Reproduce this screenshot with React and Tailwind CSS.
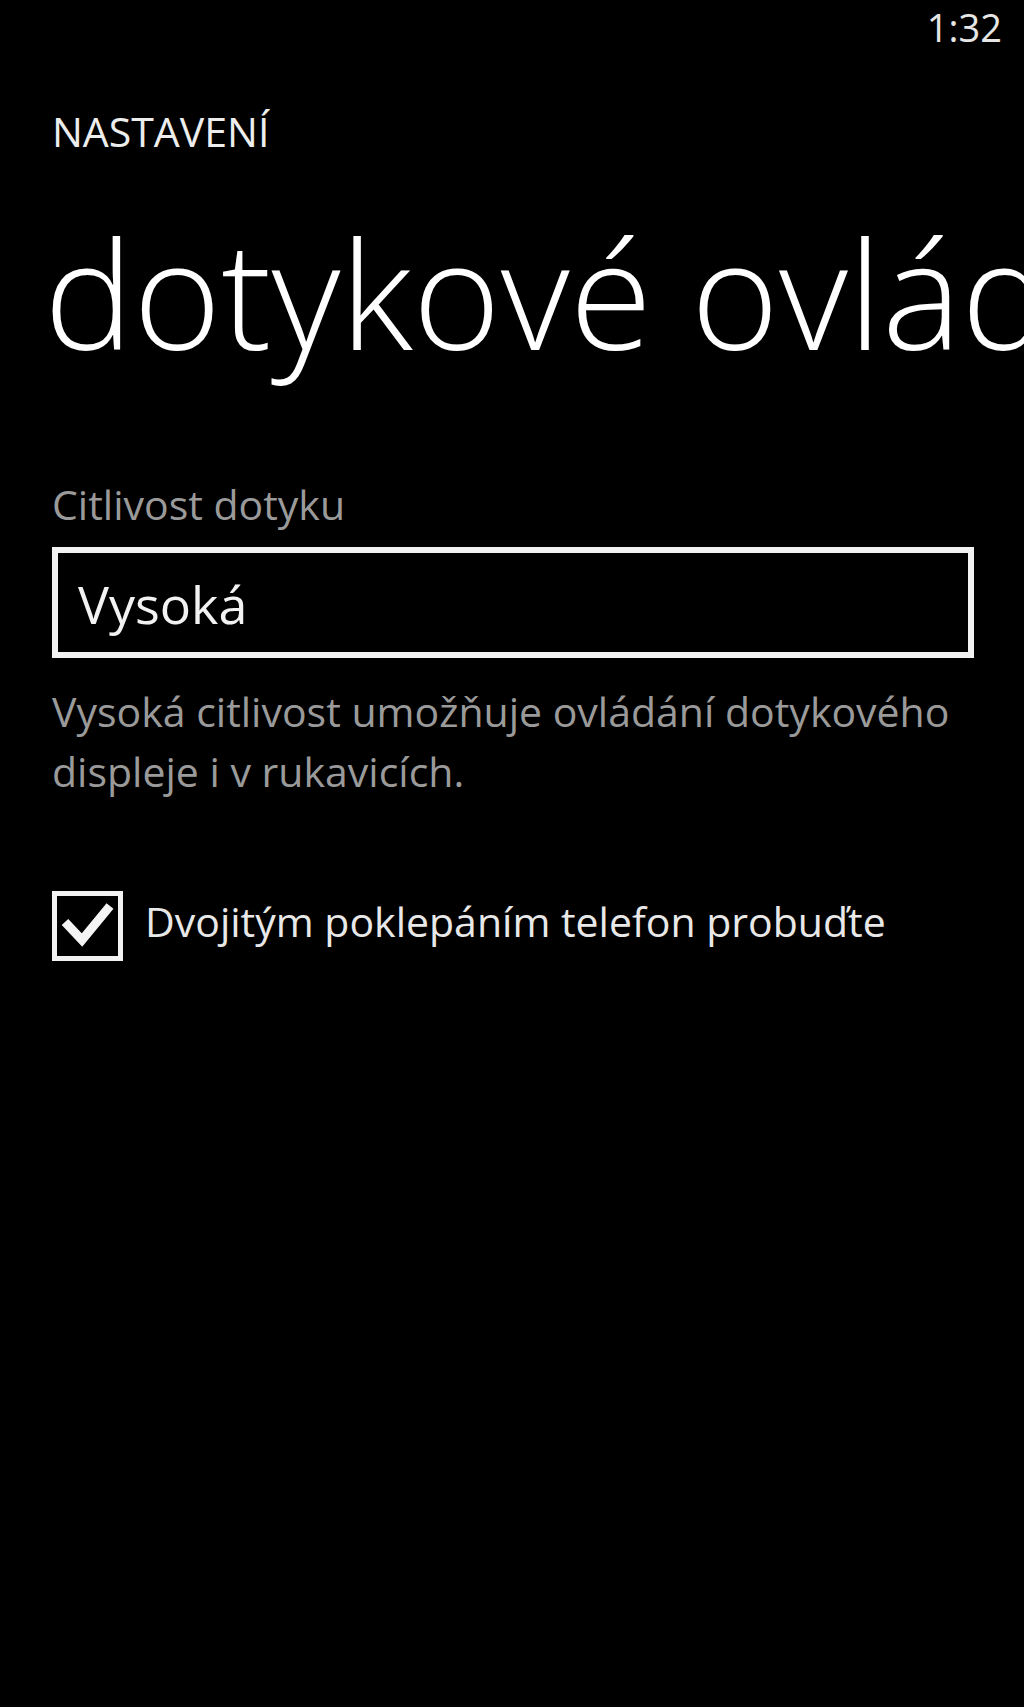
export default function App() {
  return (
    <div className="w-[1024px] h-[1707px] bg-black overflow-hidden text-white font-['Open_Sans',sans-serif]">
      {/* status bar */}
      <div className="h-[60px] flex justify-end pr-[22px] pt-[8px] text-[38px] leading-none text-[#e6e6e6]">
        1:32
      </div>

      <div className="px-[52px]">
        <div className="mt-[51px] text-[41px] leading-none text-[#ededed]">NASTAVENÍ</div>

        {/* page title runs past the right edge, as on the phone */}
        <div className="mt-[65px] ml-[-8px] text-[150px] leading-none font-light whitespace-nowrap">
          dotykové ovládání
        </div>

        <div className="mt-[117px] text-[41px] leading-none text-[#9a9a9a]">Citlivost dotyku</div>

        <div className="mt-[22px] w-[922px] h-[111px] border-[6px] border-[#f2f2f2] bg-black flex items-start pt-[25px] pl-[20px]">
          <span className="text-[52px] leading-none text-[#f2f2f2]">Vysoká</span>
        </div>

        <p className="mt-[23px] w-[922px] text-[41px] leading-[60px] text-[#9a9a9a]">
          Vysoká citlivost umožňuje ovládání dotykového displeje i v rukavicích.
        </p>

        <div className="mt-[90px] flex items-start gap-[22px]">
          <div className="w-[71px] h-[70px] border-[5px] border-[#f2f2f2] bg-black shrink-0 relative">
            <svg width="71" height="70" viewBox="0 0 71 70" className="absolute left-[-5px] top-[-5px]">
              <polyline
                points="13,31 30,49 58,15"
                fill="none"
                stroke="#f5f5f5"
                strokeWidth="9"
                strokeLinejoin="miter"
              />
            </svg>
          </div>
          <div className="mt-[10px] text-[41px] leading-none text-[#e8e8e8] whitespace-nowrap">
            Dvojitým poklepáním telefon probuďte
          </div>
        </div>
      </div>
    </div>
  );
}
